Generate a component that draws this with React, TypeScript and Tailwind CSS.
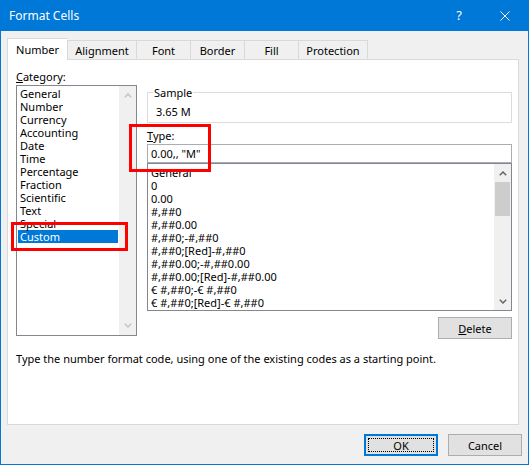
import React from "react";

const cats = ["General","Number","Currency","Accounting","Date","Time","Percentage","Fraction","Scientific","Text","Special","Custom"];
const types = ["General","0","0.00","#,##0","#,##0.00","#,##0;-#,##0","#,##0;[Red]-#,##0","#,##0.00;-#,##0.00","#,##0.00;[Red]-#,##0.00","€ #,##0;-€ #,##0","€ #,##0;[Red]-€ #,##0"];

function Chevron({ up, color }: { up?: boolean; color: string }) {
  return (
    <svg width="8" height="5" viewBox="0 0 8 5">
      <polyline
        points={up ? "0.8,4.3 4,1.1 7.2,4.3" : "0.8,0.7 4,3.9 7.2,0.7"}
        fill="none"
        stroke={color}
        strokeWidth="1.4"
      />
    </svg>
  );
}

export default function App() {
  return (
    <div className="relative w-[529px] h-[465px] bg-[#0078d7] flex flex-col font-['Noto_Sans',sans-serif] text-[11px] text-black overflow-hidden">
      {/* Title bar */}
      <div className="h-[31px] flex items-center text-white shrink-0">
        <div className="ml-[9px] text-[12px] leading-[15px]">Format Cells</div>
        <div className="ml-auto mr-[38px] text-[13px] leading-[15px]">?</div>
        <svg className="mr-[19px]" width="10" height="10" viewBox="0 0 10 10">
          <path d="M0.5 0.5 L9.5 9.5 M9.5 0.5 L0.5 9.5" stroke="white" strokeWidth="1" />
        </svg>
      </div>

      {/* Body */}
      <div className="flex-1 mx-[1px] mb-[1px] bg-[#f0f0f0] flex flex-col">
        {/* Tabs */}
        <div className="flex items-end h-[21px] mt-[7px] ml-[6px] relative z-10">
          <div className="w-[60px] h-[22px] -mb-[1px] bg-white border-t border-l border-[#d9d9d9] flex items-center justify-center leading-[15px] pb-[1px]">Number</div>
          <div className="w-[69px] h-[19px] border-t border-l border-[#d9d9d9] flex items-center justify-center leading-[15px]">Alignment</div>
          <div className="w-[54px] h-[19px] border-t border-l border-[#d9d9d9] flex items-center justify-center leading-[15px]">Font</div>
          <div className="w-[54px] h-[19px] border-t border-l border-[#d9d9d9] flex items-center justify-center leading-[15px]">Border</div>
          <div className="w-[54px] h-[19px] border-t border-l border-[#d9d9d9] flex items-center justify-center leading-[15px]">Fill</div>
          <div className="w-[70px] h-[19px] border-t border-l border-r border-[#d9d9d9] flex items-center justify-center leading-[15px]">Protection</div>
        </div>

        {/* Panel */}
        <div className="ml-[6px] w-[512px] h-[366px] bg-white border border-[#d9d9d9] flex flex-col">
          <div className="flex">
            {/* Left column */}
            <div className="ml-[8px] w-[121px] mt-[9px]">
              <div className="leading-[15px]"><span className="underline">C</span>ategory:</div>
              <div className="mt-[1px] h-[251px] border border-[#828790] flex">
                <div className="flex-1 pt-[1px]">
                  {cats.map((c) => (
                    <div
                      key={c}
                      className={
                        c === "Custom"
                          ? "mx-[1px] h-[13px] leading-[13px] pl-[2px] bg-[#0078d7] text-white"
                          : "mx-[1px] h-[13px] leading-[13px] pl-[2px]"
                      }
                    >
                      {c}
                    </div>
                  ))}
                </div>
                <div className="w-[17px] bg-[#f0f0f0] flex flex-col items-center justify-between py-[7px]">
                  <Chevron up color="#c2c2c2" />
                  <Chevron color="#c2c2c2" />
                </div>
              </div>
            </div>

            {/* Right column */}
            <div className="ml-[10px] w-[365px] mt-[32px] flex flex-col">
              <div className="relative h-[31px] border border-[#dcdcdc]">
                <span className="absolute left-[5px] -top-[8px] bg-white px-[1px] leading-[15px]">Sample</span>
                <div className="mt-[11px] ml-[8px] leading-[15px]">3.65 M</div>
              </div>
              <div className="mt-[5px] leading-[15px]"><span className="underline">T</span>ype:</div>
              <div className="mt-[1px] h-[19px] border border-[#abadb3] pl-[3px] leading-[17px]">0.00,, "M"</div>
              <div className="h-[148px] border border-[#828790] flex overflow-hidden">
                <div className="flex-1 pt-[2px] pl-[3px] overflow-hidden">
                  {types.map((t, i) => (
                    <div key={i} className="h-[13px] leading-[13px] whitespace-nowrap">{t}</div>
                  ))}
                </div>
                <div className="w-[17px] bg-[#f0f0f0] flex flex-col">
                  <div className="h-[18px] flex items-center justify-center">
                    <Chevron up color="#606060" />
                  </div>
                  <div className="mx-[1px] h-[34px] bg-[#cdcdcd]" />
                  <div className="flex-1" />
                  <div className="h-[17px] flex items-center justify-center">
                    <Chevron color="#606060" />
                  </div>
                </div>
              </div>
              <div className="mt-[6px] self-end w-[74px] h-[22px] bg-[#e1e1e1] border border-[#adadad] flex items-center justify-center leading-[15px]">
                <span><span className="underline">D</span>elete</span>
              </div>
            </div>
          </div>
          <div className="ml-[8px] mt-[12px] leading-[15px]">
            Type the number format code, using one of the existing codes as a starting point.
          </div>
        </div>

        {/* Buttons */}
        <div className="flex justify-end mt-[9px] mr-[6px] gap-[10px]">
          <div className="relative w-[74px] h-[22px] bg-[#e1e1e1] border-2 border-[#0078d7] flex items-center justify-center leading-[15px]">
            <div className="absolute inset-[2px] border border-dotted border-black" />
            OK
          </div>
          <div className="w-[74px] h-[22px] bg-[#e1e1e1] border border-[#adadad] flex items-center justify-center leading-[15px]">
            Cancel
          </div>
        </div>
      </div>

      {/* Red annotation boxes */}
      <div className="absolute left-[129px] top-[124px] w-[82px] h-[48px] border-[3px] border-[#ff0000]" />
      <div className="absolute left-[11px] top-[222px] w-[117px] h-[29px] border-[3px] border-[#ff0000]" />
    </div>
  );
}
